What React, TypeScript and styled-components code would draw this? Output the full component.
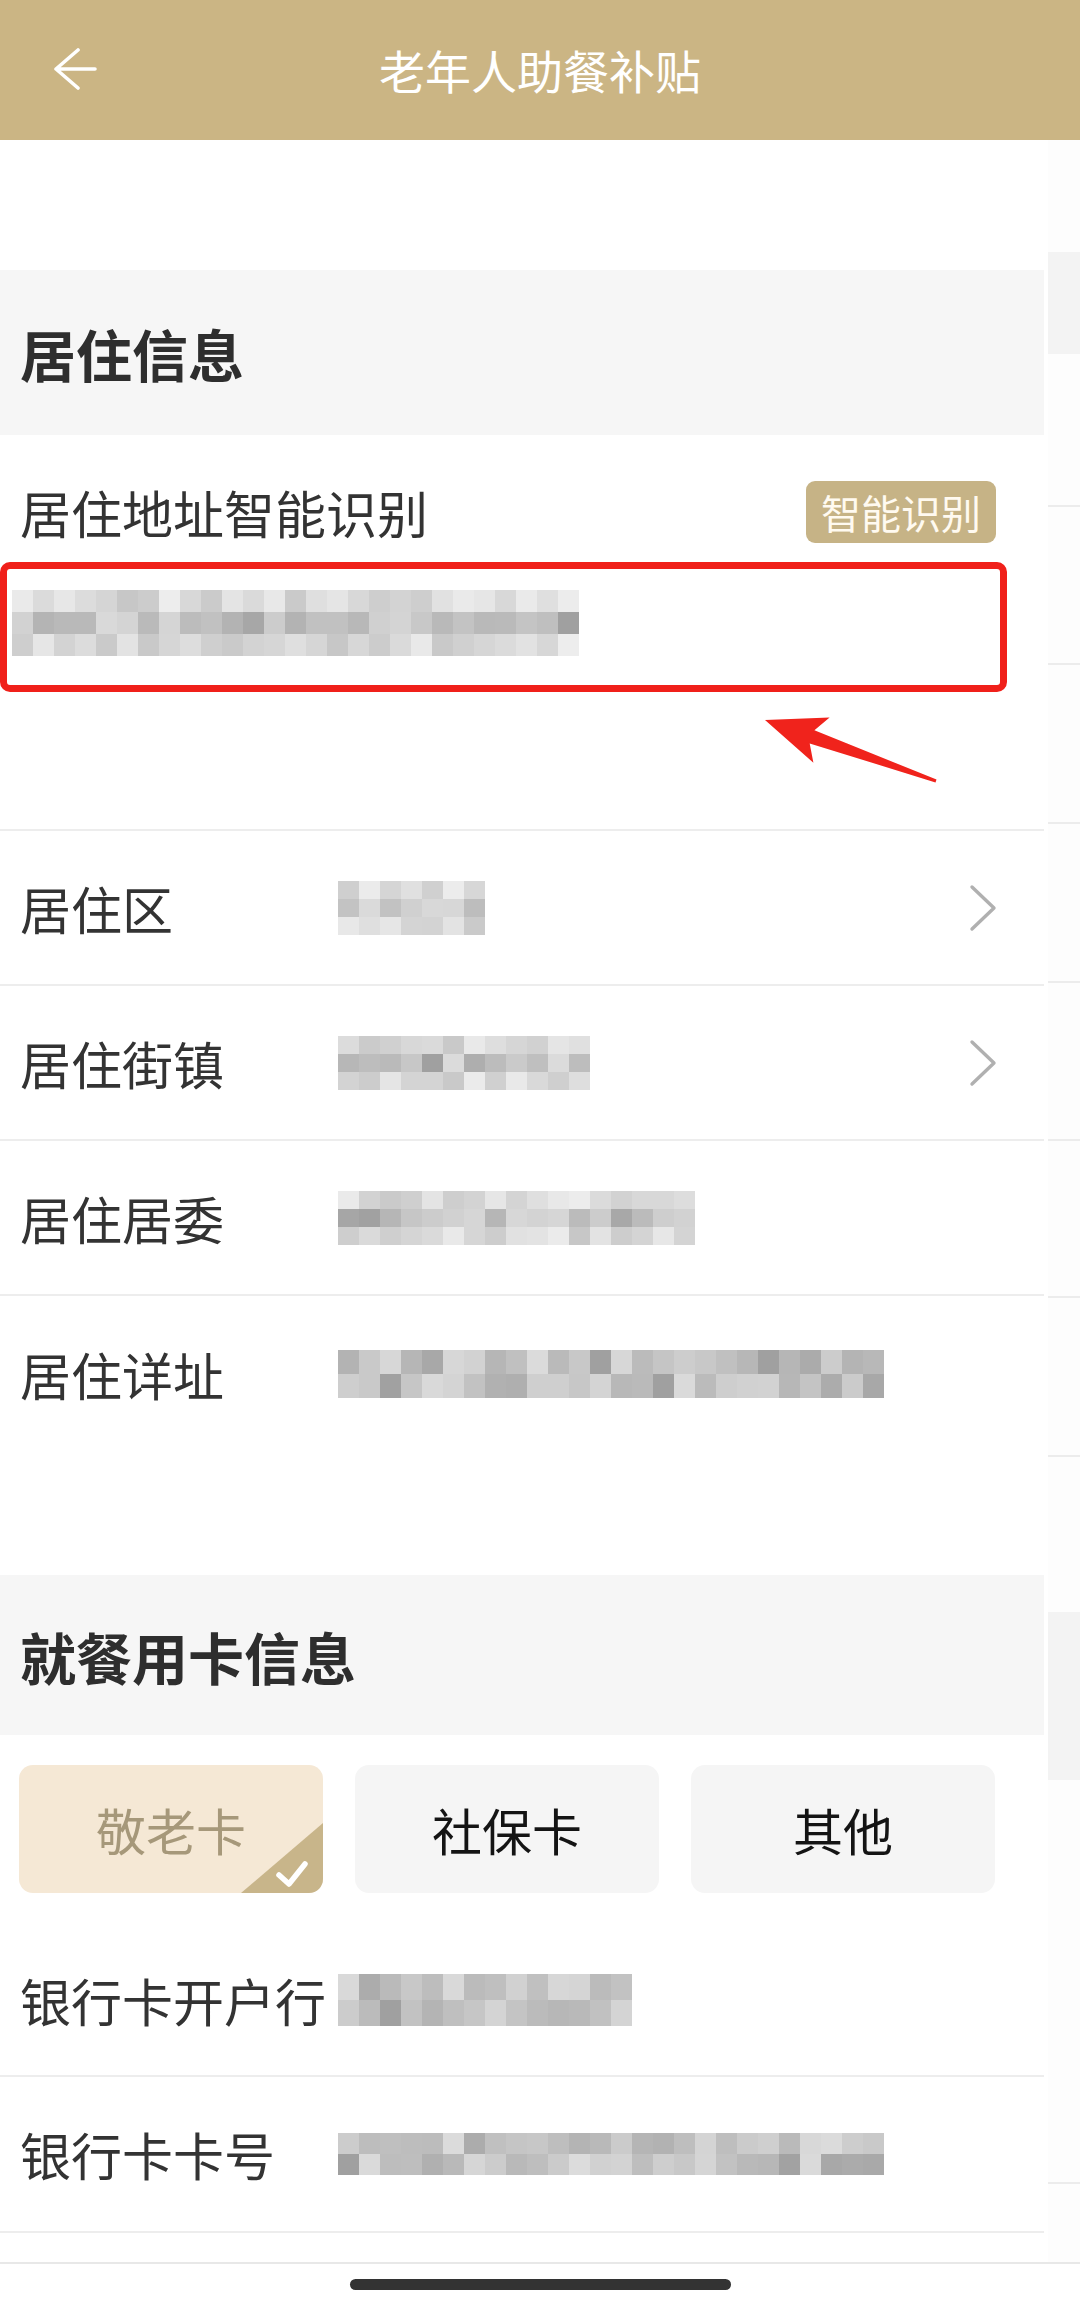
import React from 'react';
import styled, { createGlobalStyle } from 'styled-components';

const GlobalStyle = createGlobalStyle`
  html, body {
    margin: 0;
    padding: 0;
    background: #ffffff;
  }
  body {
    font-family: "Noto Sans CJK SC", "Noto Sans", sans-serif;
    color: #333333;
  }
`;

const Page = styled.div`
  width: 1080px;
  height: 2306px;
  display: flex;
  flex-direction: column;
  overflow: hidden;
  background: #ffffff;
`;

const Header = styled.header`
  height: 140px;
  flex: none;
  background: #cbb584;
  display: grid;
  grid-template-columns: 160px 1fr 160px;
  align-items: center;
`;

const BackButton = styled.div`
  padding-left: 53px;
  display: flex;
  align-items: center;
  height: 40px;
  margin-top: -2px;
`;

const Title = styled.h1`
  margin: 0;
  text-align: center;
  font-size: 46px;
  font-weight: 400;
  color: #ffffff;
  margin-top: -2px;
`;

const Body = styled.div`
  flex: none;
  height: 2122px;
  display: flex;
`;

const Main = styled.main`
  width: 1044px;
  flex: none;
  display: flex;
  flex-direction: column;
  background: #ffffff;
`;

const TopGap = styled.div`
  height: 130px;
  flex: none;
`;

const SectionBand = styled.div<{ $h: number }>`
  height: ${({ $h }) => $h}px;
  flex: none;
  background: #f6f6f6;
  display: flex;
  align-items: center;
  padding-left: 20px;
  font-size: 56px;
  font-weight: 700;
  color: #2e2e2e;
`;

const AddressBlock = styled.div`
  position: relative;
  height: 396px;
  flex: none;
  border-bottom: 2px solid #ededed;
  box-sizing: border-box;
`;

const AddressHead = styled.div`
  margin-top: 27px;
  height: 100px;
  display: flex;
  align-items: center;
  justify-content: space-between;
  padding: 0 48px 0 20px;
`;

const Label = styled.span<{ $w?: number }>`
  font-size: 51px;
  color: #333333;
  white-space: nowrap;
  ${({ $w }) => ($w ? `width: ${$w}px; flex: none;` : '')}
`;

const SmartButton = styled.div`
  height: 62px;
  padding: 0 15px;
  border-radius: 9px;
  background: #c6b386;
  color: #fffaf0;
  font-size: 40px;
  display: flex;
  align-items: center;
`;

const HighlightBox = styled.div`
  width: 1007px;
  height: 130px;
  box-sizing: border-box;
  border: 7px solid #f0201a;
  border-radius: 10px;
  padding: 21px 0 0 5px;
`;

const PointerArrow = styled.svg`
  position: absolute;
  left: 740px;
  top: 255px;
`;

const Row = styled.div<{ $h?: number; $line?: boolean }>`
  height: ${({ $h }) => $h ?? 155}px;
  flex: none;
  box-sizing: border-box;
  display: flex;
  align-items: center;
  padding: 0 46px 0 20px;
  border-bottom: ${({ $line }) => ($line === false ? 'none' : '2px solid #ededed')};
`;

const Value = styled.div`
  flex: 1;
  display: flex;
  align-items: center;
`;

const Chevron = styled.svg`
  flex: none;
`;

const DetailSpacer = styled.div`
  height: 124px;
  flex: none;
`;

const CardOptions = styled.div`
  display: grid;
  grid-template-columns: repeat(3, 304px);
  gap: 32px;
  padding: 30px 0 31px 19px;
  flex: none;
`;

const CardOption = styled.div<{ $active?: boolean }>`
  position: relative;
  height: 128px;
  border-radius: 14px;
  overflow: hidden;
  background: ${({ $active }) => ($active ? '#f5e8d5' : '#f5f5f5')};
  color: ${({ $active }) => ($active ? '#a6987a' : '#141414')};
  font-size: 50px;
  display: flex;
  align-items: center;
  justify-content: center;
`;

const CheckBadge = styled.svg`
  position: absolute;
  right: 0;
  bottom: 0;
`;

const Strip = styled.aside`
  flex: 1;
  display: flex;
  flex-direction: column;
  background: #fdfdfd;
  margin-left: 4px;
`;

const StripPiece = styled.div<{ $h: number; $fill?: boolean; $line?: boolean }>`
  height: ${({ $h }) => $h}px;
  flex: none;
  box-sizing: border-box;
  background: ${({ $fill }) => ($fill ? '#f3f3f3' : 'transparent')};
  border-bottom: ${({ $line }) => ($line ? '2px solid #ececec' : 'none')};
`;

const Footer = styled.footer`
  flex: 1;
  border-top: 2px solid #e8e8e8;
  display: flex;
  justify-content: center;
  background: #ffffff;
`;

const HomeIndicator = styled.div`
  margin-top: 15px;
  width: 381px;
  height: 11px;
  border-radius: 6px;
  background: #333333;
`;

const MosaicGrid = styled.div<{ $cols: number; $cw: number; $ch: number }>`
  display: grid;
  grid-template-columns: repeat(${({ $cols }) => $cols}, ${({ $cw }) => $cw}px);
  grid-auto-rows: ${({ $ch }) => $ch}px;
`;

const MosaicCell = styled.div``;

// pixelated (redacted) value
const Mosaic: React.FC<{ cols: number; rows?: number; seed: number; cw?: number; ch?: number }> = ({
  cols,
  rows = 3,
  seed,
  cw = 21,
  ch = 20
}) => {
  let s = seed * 9301 + 49297;
  const rand = () => {
    s = (s * 9301 + 49297) % 233280;
    return s / 233280;
  };
  const cells: string[] = [];
  for (let r = 0; r < rows; r++) {
    for (let c = 0; c < cols; c++) {
      const edge = rows > 2 && (r === 0 || r === rows - 1);
      const base = edge ? 218 : 200;
      let g = Math.round(base + (rand() - 0.5) * 40);
      if (!edge && rand() > 0.75) g -= 24;
      g = Math.max(160, Math.min(242, g));
      cells.push(`rgb(${g},${g},${g})`);
    }
  }
  return (
    <MosaicGrid $cols={cols} $cw={cw} $ch={ch}>
      {cells.map((c, i) => (
        <MosaicCell key={i} style={{ background: c }} />
      ))}
    </MosaicGrid>
  );
};

const ChevronIcon = () => (
  <Chevron width="32" height="48" viewBox="0 0 32 48">
    <polyline points="6,3 28,24 6,45" fill="none" stroke="#b0b0b0" strokeWidth="3.4" strokeLinecap="round" strokeLinejoin="round" />
  </Chevron>
);

const stripPieces = [
  { h: 112 },
  { h: 102, fill: true },
  { h: 153, line: true },
  { h: 158, line: true },
  { h: 159, line: true },
  { h: 159, line: true },
  { h: 158, line: true },
  { h: 157, line: true },
  { h: 159, line: true },
  { h: 155 },
  { h: 168, fill: true },
  { h: 404, line: true }
];

const residence = [
  { label: '居住区', cols: 7, seed: 3, arrow: true },
  { label: '居住街镇', cols: 12, seed: 7, arrow: true },
  { label: '居住居委', cols: 17, seed: 11, arrow: false }
];

export default function App() {
  return (
    <Page>
      <GlobalStyle />
      <Header>
        <BackButton>
          <svg width="44" height="42" viewBox="0 0 44 42">
            <path d="M42 21 H3 M25 2 L3 21 L25 40" fill="none" stroke="#ffffff" strokeWidth="3.6" strokeLinecap="round" strokeLinejoin="round" />
          </svg>
        </BackButton>
        <Title>老年人助餐补贴</Title>
        <div />
      </Header>
      <Body>
        <Main>
          <TopGap />
          <SectionBand $h={165}>居住信息</SectionBand>
          <AddressBlock>
            <AddressHead>
              <Label>居住地址智能识别</Label>
              <SmartButton>智能识别</SmartButton>
            </AddressHead>
            <HighlightBox>
              <Mosaic cols={27} seed={5} ch={22} />
            </HighlightBox>
            <PointerArrow width="220" height="110" viewBox="0 0 220 110">
              <polygon
                points="25,30 89.6,27.6 74.4,40.2 196.5,89.6 195.5,92.4 69.7,53.4 73.4,72.8"
                fill="#f0231c"
              />
            </PointerArrow>
          </AddressBlock>
          {residence.map((r) => (
            <Row key={r.label}>
              <Label $w={318}>{r.label}</Label>
              <Value>
                <Mosaic cols={r.cols} seed={r.seed} ch={18} />
              </Value>
              {r.arrow && <ChevronIcon />}
            </Row>
          ))}
          <Row $line={false}>
            <Label $w={318}>居住详址</Label>
            <Value>
              <Mosaic cols={26} rows={2} seed={13} ch={24} />
            </Value>
          </Row>
          <DetailSpacer />
          <SectionBand $h={160}>就餐用卡信息</SectionBand>
          <CardOptions>
            <CardOption $active>
              敬老卡
              <CheckBadge width="82" height="70" viewBox="0 0 82 70">
                <polygon points="0,70 82,0 82,70" fill="#c8b58a" />
                <polyline points="38,52 48,61 64,41" fill="none" stroke="#ffffff" strokeWidth="5.5" strokeLinecap="round" strokeLinejoin="round" />
              </CheckBadge>
            </CardOption>
            <CardOption>社保卡</CardOption>
            <CardOption>其他</CardOption>
          </CardOptions>
          <Row $h={153}>
            <Label $w={318}>银行卡开户行</Label>
            <Value>
              <Mosaic cols={14} rows={2} seed={17} ch={26} />
            </Value>
          </Row>
          <Row $h={156}>
            <Label $w={318}>银行卡卡号</Label>
            <Value>
              <Mosaic cols={26} rows={2} seed={19} ch={21} />
            </Value>
          </Row>
        </Main>
        <Strip>
          {stripPieces.map((p, i) => (
            <StripPiece key={i} $h={p.h} $fill={p.fill} $line={p.line} />
          ))}
        </Strip>
      </Body>
      <Footer>
        <HomeIndicator />
      </Footer>
    </Page>
  );
}
